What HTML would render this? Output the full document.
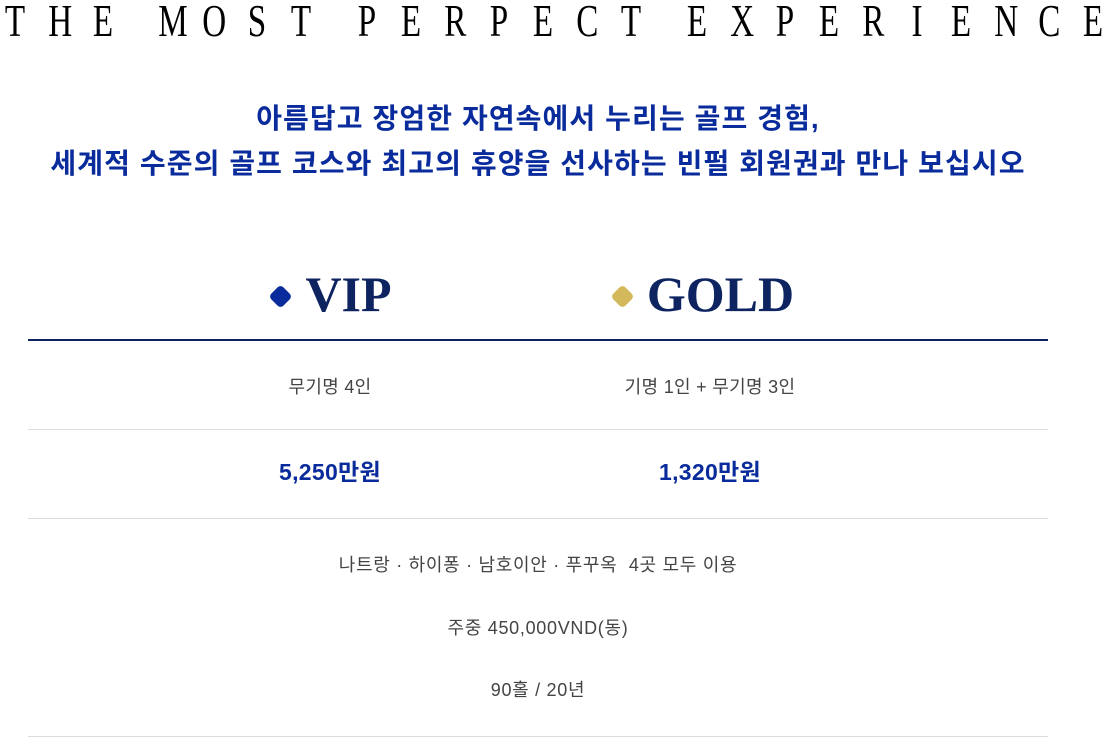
<!DOCTYPE html>
<html><head><meta charset="utf-8"><style>
body{margin:0;width:1108px;height:737px;background:#fff;overflow:hidden;font-family:"Liberation Sans","Noto Sans CJK KR",sans-serif;}
.title{position:absolute;left:0;top:-4px;width:1108px;display:flex;justify-content:space-between;font-family:"Liberation Serif",serif;font-size:46px;color:#000;line-height:50px}
.title span{display:inline-block;transform:scaleX(0.72);width:30px;text-align:center}
.title i{width:8px}
.sub{position:absolute;left:28px;width:1020px;text-align:center;color:#0a2b9b;font-weight:bold;font-size:28px;letter-spacing:1.1px;line-height:45px;top:96px}
.col{position:absolute;text-align:center;width:380px}
.hd{font-family:"Liberation Serif",serif;font-weight:bold;font-size:50px;color:#0d2461;top:268px;line-height:52px}
.dia{display:inline-block;width:17px;height:17px;border-radius:4px;transform:rotate(45deg);margin-right:16px;vertical-align:6px}
.line{position:absolute;left:28px;width:1020px;height:1px;background:#ddd}
.t1{font-size:18px;color:#444;top:376px;line-height:22px;letter-spacing:0.3px}
.t2{font-size:23px;color:#0a2b9b;font-weight:bold;top:458px;line-height:28px;letter-spacing:0.3px}
.c{position:absolute;left:28px;width:1020px;text-align:center;color:#444;font-size:18px;letter-spacing:0.7px;line-height:22px}
</style></head><body>
<div class="title"><span>T</span><span>H</span><span>E</span><i></i><span>M</span><span>O</span><span>S</span><span>T</span><i></i><span>P</span><span>E</span><span>R</span><span>P</span><span>E</span><span>C</span><span>T</span><i></i><span>E</span><span>X</span><span>P</span><span>E</span><span>R</span><span>I</span><span>E</span><span>N</span><span>C</span><span>E</span></div>
<div class="sub">아름답고 장엄한 자연속에서 누리는 골프 경험,<br>세계적 수준의 골프 코스와 최고의 휴양을 선사하는 빈펄 회원권과 만나 보십시오</div>
<div class="col hd" style="left:142px"><span class="dia" style="background:#0a2b9b"></span>VIP</div>
<div class="col hd" style="left:514px"><span class="dia" style="background:#d4b85c"></span>GOLD</div>
<div class="line" style="top:339px;height:2px;background:#0d2461"></div>
<div class="col t1" style="left:140px">무기명 4인</div>
<div class="col t1" style="left:520px">기명 1인 + 무기명 3인</div>
<div class="line" style="top:429px"></div>
<div class="col t2" style="left:140px">5,250만원</div>
<div class="col t2" style="left:520px">1,320만원</div>
<div class="line" style="top:518px"></div>
<div class="c" style="top:554px">나트랑 · 하이퐁 · 남호이안 · 푸꾸옥&nbsp; 4곳 모두 이용</div>
<div class="c" style="top:617px">주중 450,000VND(동)</div>
<div class="c" style="top:679px">90홀 / 20년</div>
<div class="line" style="top:736px"></div>
</body></html>
